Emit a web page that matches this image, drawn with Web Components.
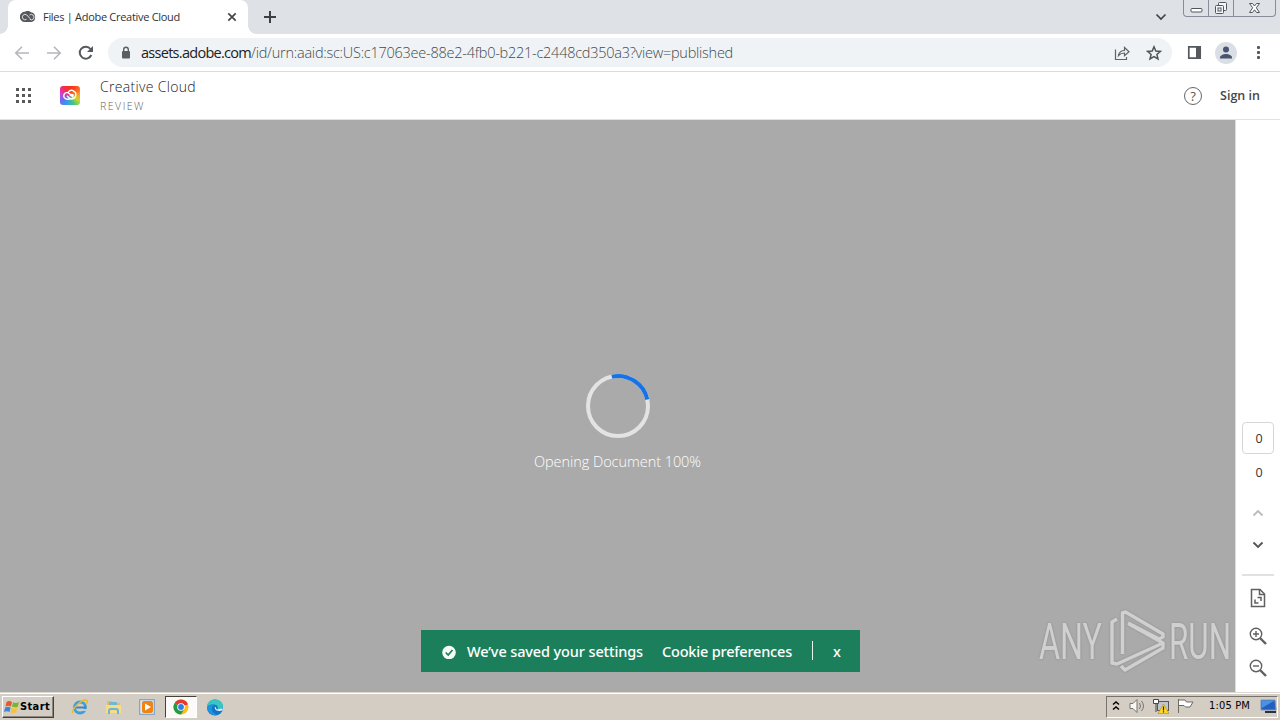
<!DOCTYPE html>
<html lang="en">
<head>
<meta charset="utf-8">
<title>Files | Adobe Creative Cloud</title>
<style>
html,body{margin:0;height:100%;overflow:hidden;font-family:"Open Sans","Noto Sans",sans-serif}
</style>
</head>
<body>
<desktop-screen></desktop-screen>
<script>
function define(name, html, ready) {
  const t = document.createElement('template');
  t.innerHTML = '<style>*{box-sizing:border-box}svg{display:block;flex:none}</style>' + html;
  customElements.define(name, class extends HTMLElement {
    constructor() {
      super();
      this.attachShadow({mode: 'open'}).append(t.content.cloneNode(true));
    }
    connectedCallback() { if (ready) ready(this); }
  });
}

// A single-line label whose tracking adapts to a requested width.
define('fit-label', `<style>
:host{display:block;white-space:pre;flex:none;line-height:20px}
span{display:inline-block}
</style><span><slot></slot></span>`, el => {
  const want = +el.getAttribute('width');
  const s = el.shadowRoot.querySelector('span');
  el.style.width = want + 'px';
  const n = el.textContent.length;
  s.style.letterSpacing = ((want - s.getBoundingClientRect().width) / n) + 'px';
});

define('window-controls', `<style>
:host{display:flex;width:93px;height:17px;border:1px solid #888d99;border-top:0;border-radius:0 0 4px 4px}
div{display:flex;justify-content:center;height:16px;border-right:1px solid #888d99;width:25px}
div:nth-of-type(2){width:25px}div:last-child{border:0;width:41px}
</style>
<div><svg width="13" height="16"><rect x="1" y="8.5" width="11" height="3.5" rx="1" fill="#fff" stroke="#50555f"/></svg></div>
<div><svg width="14" height="16" fill="#f4f5f7" stroke="#50555f"><rect x="4.500" y="2.500" width="8" height="8" rx="1"/><rect x="1.500" y="5.500" width="8" height="8" rx="1"/><rect x="4" y="8" width="3" height="3"/></svg></div>
<div><svg width="13" height="16"><path d="M1.500 3.500h3l2 2.500 2-2.500h3l-3.200 4.300 3.200 4.700h-3l-2-2.700-2 2.700h-3l3.200-4.700z" fill="#fff" stroke="#50555f"/></svg></div>`);

define('tab-strip', `<style>
:host{display:flex;height:34px;background:#dee1e6;padding-left:8px;align-items:flex-start}
.tab{width:240px;height:34px;background:#fff;border-radius:8px 8px 0 0;display:flex;align-items:center;padding-left:12px;position:relative}
.tab:before,.tab:after{content:"";position:absolute;bottom:0;width:8px;height:8px}
.tab:before{left:-8px;background:radial-gradient(circle at 0 0,#dee1e6 7.500px,#fff 8px)}
.tab:after{right:-8px;background:radial-gradient(circle at 100% 0,#dee1e6 7.500px,#fff 8px)}
fit-label{font-size:11px;color:#303236;margin-left:7px}
.x{margin-left:47px}.plus{margin:10px 0 0 15px}.chev{margin:13px 16px 0 auto}
window-controls{margin-right:4px}
</style>
<div class="tab">
<svg width="16" height="12" viewBox="0 0 16 12"><path d="M5 .8a5 5 0 0 0-.2 10.200h6.500A5 5 0 0 0 11 1.200 5 5 0 0 0 5 .8z" fill="#55585c"/><path d="M6.500 8.300A2.700 2.700 0 1 1 6.800 4l3.400 3.700M9.500 4.100a2.700 2.700 0 1 1 .2 4.200" stroke="#e3e3e3" fill="none" stroke-width="1"/></svg>
<fit-label width="137">Files | Adobe Creative Cloud</fit-label>
<svg class="x" width="10" height="10"><path d="M1.300 1.300l7.400 7.400m0-7.400l-7.400 7.400" stroke="#43464a" stroke-width="1.700"/></svg>
</div>
<svg class="plus" width="14" height="14"><path d="M7 1v12M1 7h12" stroke="#3c4043" stroke-width="2"/></svg>
<svg class="chev" width="12" height="8"><path d="M1.500 1.500L6 6l4.500-4.500" fill="none" stroke="#3f444a" stroke-width="1.700"/></svg>
<window-controls></window-controls>`);

define('browser-toolbar', `<style>
:host{display:flex;height:38px;background:#fff;border-bottom:1px solid #dadce0;align-items:center;padding:0 13px 0 14px}
.nav{display:flex;gap:16px}
.url{width:1064px;height:29px;background:#f0f3f5;border-radius:15px;margin-left:14px;display:flex;align-items:center;padding:0 10px 0 12px}
.url fit-label{font-size:14.500px;font-weight:300;color:#44494e}
.url .h{color:#202124;font-weight:400}
.lock{margin-right:9px}.share{margin-left:auto;margin-right:16px}
.panel{margin-left:15px}.av{width:22px;height:22px;border-radius:50%;background:#dadfe6;margin:0 14px 0 13px}
</style>
<div class="nav">
<svg width="16" height="16" fill="none" stroke="#b5b7ba" stroke-width="1.600"><path d="M15 8H2M8 1.800L1.800 8 8 14.200"/></svg>
<svg width="16" height="16" fill="none" stroke="#b5b7ba" stroke-width="1.600"><path d="M1 8h13M8 1.800L14.200 8 8 14.200"/></svg>
<svg width="16" height="16" fill="none" stroke="#55585c" stroke-width="2"><path d="M13.300 10A6 6 0 1 1 12.500 4"/><path d="M15 1v6H9z" fill="#55585c" stroke="none"/></svg>
</div>
<div class="url">
<svg class="lock" width="12" height="14"><rect x="2" y="5" width="8" height="7.500" rx="1" fill="#5a5d61"/><path d="M3.700 6V3.500a2.300 2.300 0 0 1 4.600 0V6" fill="none" stroke="#5a5d61" stroke-width="1.400"/></svg>
<fit-label class="h" width="110">assets.adobe.com</fit-label><fit-label width="482">/id/urn:aaid:sc:US:c17063ee-88e2-4fb0-b221-c2448cd350a3?view=published</fit-label>
<svg class="share" width="16" height="16" fill="none" stroke="#5f6368" stroke-width="1.200"><path d="M1.500 4.500v10h11V12"/><path d="M4.500 10.500c.5-3 2.500-5 6-5V2.500L15 6.700l-4.500 4V8c-2.500 0-4.300.5-6 2.500z"/></svg>
<svg width="16" height="16" fill="none" stroke="#505358" stroke-width="1.500"><path d="M8 1.800l1.800 4.200 4.600.4-3.500 3 1.100 4.500L8 11.500l-4 2.400 1.100-4.500-3.500-3 4.600-.4z"/></svg>
</div>
<svg class="panel" width="15" height="15"><path d="M1.800 1.800h11.400v11.400H1.800z" fill="none" stroke="#55585c" stroke-width="1.700"/><path d="M9 1h5v13H9z" fill="#55585c"/></svg>
<svg class="av" viewBox="0 0 22 22"><circle cx="11" cy="7.500" r="3" fill="#47556f"/><path d="M5 16.500v-1c0-2.300 3.500-3.500 6-3.500s6 1.200 6 3.500v1z" fill="#47556f"/></svg>
<svg width="15" height="16" fill="#55585c"><rect x="6" y="1" width="3" height="3" rx="1"/><rect x="6" y="6" width="3" height="3" rx="1"/><rect x="6" y="11" width="3" height="3" rx="1"/></svg>`);

define('cc-logo', `<style>:host{display:block;width:20px;height:19px;border-radius:3px;background:radial-gradient(circle at 50% 0,#f8301e 0,#f8301e99 25%,transparent 60%),conic-gradient(from 0deg at 50% 50%,#fb421c,#ff9c20 20%,#cbd62d 33%,#43c87b 43%,#3499f2 57%,#7068ee 67%,#d33fdf 79%,#f32578 92%,#fb421c)}</style>
<svg width="20" height="19" fill="none" stroke="#fff" stroke-width="1.400" stroke-linecap="round"><path d="M9 13.200H7a3.300 3.300 0 1 1 2.300-5.700l3.600 3.600M8.200 6.200a4.200 4.200 0 1 1 1.700 6.300L7.400 10.200M10.200 9.200a2 2 0 0 1 3 0"/></svg>`);

define('app-header', `<style>
:host{display:flex;height:48px;background:#fff;border-bottom:1px solid #e1e1e1;align-items:center;padding:0 20px 0 16px}
cc-logo{margin-left:28px}
.names{margin-left:20px;padding-top:2px;display:flex;flex-direction:column}
.a{font-size:14px;font-weight:300;color:#222;line-height:18px;height:19px}
.b{font-size:10.500px;color:#606060;line-height:18px;height:18px;font-weight:300}
.help{margin-left:auto;width:18px;height:18px;border:1.500px solid #666;border-radius:50%;display:flex;justify-content:center;align-items:center;color:#555;font-size:13px}
.s{margin-left:18px;font-size:12.500px;font-weight:600;color:#464646}
</style>
<svg width="16" height="16" fill="#5a5a5a"><path d="M0 0h3v3H0zM6 0h3v3H6zM12 0h3v3h-3zM0 6h3v3H0zM6 6h3v3H6zM12 6h3v3h-3zM0 12h3v3H0zM6 12h3v3H6zM12 12h3v3h-3z"/></svg>
<cc-logo></cc-logo>
<div class="names"><fit-label class="a" width="96">Creative Cloud</fit-label><fit-label class="b" width="45">REVIEW</fit-label></div>
<div class="help">?</div><fit-label class="s" width="40">Sign in</fit-label>`);

define('cookie-bar', `<style>
:host{display:flex;width:439px;height:42px;background:#1b7f5c;align-items:center;padding-left:21px;color:#fff;font-size:14.500px;font-weight:500;font-family:"Noto Sans",sans-serif}
.m{margin-left:11px}.p{margin-left:19px}i{width:1px;height:19px;background:#e9f4f0;margin:0 20px 2px 20px}
</style>
<svg width="14" height="16"><circle cx="7" cy="9.500" r="6.800" fill="#f5faf8"/><path d="M3.700 9.500L6.200 12l4.300-5" fill="none" stroke="#1b7f5c" stroke-width="1.700"/></svg>
<fit-label class="m" width="176">We’ve saved your settings</fit-label><fit-label class="p" width="130">Cookie preferences</fit-label><i></i><fit-label width="9">x</fit-label>`);

define('any-run', `<style>:host{display:block}text{font-family:Roboto,sans-serif;font-size:50px;font-weight:400}</style>
<svg width="200" height="70" fill="#d0d0d0" stroke="none">
<g style="filter:drop-shadow(0 0 1px #8c8c8c)"><text x="3" y="54" textLength="63" lengthAdjust="spacingAndGlyphs">ANY</text><text x="133" y="54" textLength="62" lengthAdjust="spacingAndGlyphs">RUN</text>
<g fill="none" stroke="#d0d0d0" stroke-width="3.500" stroke-linejoin="round"><path d="M81 14l-5 3v41l5 1 46-21-34-19"/><path d="M86.500 49V8l3-1 37.500 22v3l-4 2-31-16M85 61l4 4 38-22v-5"/></g></g></svg>`);

define('review-stage', `<style>
:host{display:grid;width:1235px;height:572px;background:#aaa;grid-template:1fr/1fr;position:relative}
.load{grid-area:1/1;display:flex;flex-direction:column;align-items:center;padding-top:253px}
.load fit-label{margin-top:13px;font-size:14.500px;font-weight:350;color:#fff}
cookie-bar{grid-area:1/1;align-self:end;margin:0 0 20px 421px}
any-run{position:absolute;right:-1px;bottom:17px}
</style>
<div class="load"><svg width="66" height="66" fill="none" stroke-width="4"><circle cx="33" cy="33" r="30" stroke="#e3e3e3"/><path d="M26.800 3.650A30 30 0 0 1 62.300 26.500" stroke="#1473e6"/></svg><fit-label width="167">Opening Document 100%</fit-label></div>
<cookie-bar></cookie-bar><any-run></any-run>`);

define('page-rail', `<style>
:host{display:flex;flex-direction:column;width:45px;height:572px;background:#fff;align-items:center;border-left:1px solid #ddd}
.n{width:32px;height:32px;border:1px solid #d6d6d6;border-radius:4px;display:flex;align-items:center;justify-content:center;margin-top:302px;font-size:12.500px;color:#333;padding-left:2px}
.t{border:0;margin-top:1px;height:34px}
.u{margin-top:20px}.d{margin-top:24px}hr{width:32px;border:0;height:2px;background:#e1e1e1;margin:25px 0 12px}
.z{margin-top:19px}.y{margin-top:14px}
</style>
<div class="n">0</div><div class="n t">0</div>
<svg class="u" width="12" height="8"><path d="M1.500 6.500L6 2l4.500 4.500" fill="none" stroke="#bbb" stroke-width="1.800"/></svg>
<svg class="d" width="12" height="8"><path d="M1.500 1.500L6 6l4.500-4.500" fill="none" stroke="#555" stroke-width="1.900"/></svg>
<hr>
<svg width="16" height="20" fill="none" stroke="#606060" stroke-width="1.500"><path d="M1.500 1.500h8.500L14.500 6v12.500h-13z"/><path d="M9.500 2v4.500h5M7.500 9.500H11V13M8.500 15H5v-3.500"/></svg>
<svg class="z" width="18" height="18" fill="none" stroke="#606060" stroke-width="1.400"><circle cx="7" cy="7" r="5.700"/><path d="M4 7h6M7 4v6"/><path d="M11 11l6 6" stroke-width="2.400"/></svg>
<svg class="y" width="18" height="18" fill="none" stroke="#606060" stroke-width="1.400"><circle cx="7" cy="7" r="5.700"/><path d="M4 7h6"/><path d="M11 11l6 6" stroke-width="2.400"/></svg>`);

define('system-tray', `<style>
:host{display:flex;width:172px;height:22px;border:1px solid;border-color:#77736c #fff #fff #77736c;align-items:center;padding:0 0 2px 5px}
fit-label{font:11px/20px "DejaVu Sans Condensed","DejaVu Sans",sans-serif;font-stretch:condensed;color:#000;margin:0 10px 0 15px}
.v{margin-left:9px}.n{margin-left:8px}.f{margin-left:8px}
</style>
<svg width="8" height="12" fill="none" stroke="#000" stroke-width="1.500"><path d="M1 4.500L4 2l3 2.500M1 9.500L4 7l3 2.500"/></svg>
<svg class="v" width="16" height="16"><path d="M1 5.500h3l4-4v13l-4-4H1z" fill="#f8f8f6" stroke="#77746e"/><path d="M10.500 5q2 3 0 6M12.500 3q4 5 0 10" fill="none" stroke="#77746e"/></svg>
<svg class="n" width="16" height="16"><rect x="4.500" y="3.500" width="11" height="9" fill="#bec7d0" stroke="#55565a"/><path d="M.5 1.500h5v4h-5zM3 5v9" fill="#fff" stroke="#44464a"/><path d="M10.500 6L16 15.500H5z" fill="#ffd82a" stroke="#b58b00" stroke-width=".6"/><path d="M10.500 8.500v4M10.500 13.200v1.300" stroke="#222" stroke-width="1.200"/></svg>
<svg class="f" width="17" height="16"><path d="M1.500 1v14M2 2h6l1.500 2H16l-3 5H8.500L7 7.500H2" fill="#fff" stroke="#6d6a64"/></svg>
<fit-label width="41">1:05 PM</fit-label>
<svg width="17" height="16"><path d="M1 2h14l1 10H1z" fill="#235fc1" stroke="#7395be"/><path d="M1.500 2.500h13L2 10z" fill="#4d91e2"/><path d="M5 14h11" stroke="#263442" stroke-width="2"/></svg>`);

define('task-bar', `<style>
:host{display:flex;height:28px;background:#d4cdc4;border-top:1px solid #ddd9d2;box-shadow:inset 0 1px #fff;align-items:center;padding:1px 2px 0 2px}
.start{display:flex;align-items:center;width:52px;height:22px;border:1px solid;border-color:#fff #45423d #45423d #fff;box-shadow:inset -1px -1px #8b867e;padding-left:1px}
.start fit-label{font:bold 11px/20px "DejaVu Sans Condensed","DejaVu Sans",sans-serif;color:#000}
.apps{display:flex;align-items:center;margin-left:18px}
.on{width:32px;height:22px;background:#fbfaf8;border:1px solid;border-color:#45423d #fff #fff #45423d;display:flex;align-items:center;justify-content:center}
.g{margin-left:17px}.w{margin:0 10px 0 17px}.e{margin-left:9px}
system-tray{margin-left:auto}
</style>
<div class="start"><svg width="16" height="16"><path d="M2.500 3Q5 1 8 3L7 7.500Q4 6 1.500 7.500z" fill="#e45a28"/><path d="M9 3.300q2.700 1.500 6-.3l-1.200 4.700Q11 9 8 7.600z" fill="#75b72f"/><path d="M1.200 8.500q2.500-1.500 5.400 0L5.500 13Q3 11.500 0 13z" fill="#3c86d9"/><path d="M7.700 8.700q2.500 1.500 5.700 0l-1.200 4.600q-2.700 1.500-5.600 0z" fill="#f5c431"/></svg><fit-label width="30">Start</fit-label></div>
<div class="apps">
<svg width="16" height="16" fill="none"><circle cx="8" cy="8.500" r="5.500" stroke="#3aa0df" stroke-width="2.800"/><path d="M9 11h6" stroke="#d4cdc4" stroke-width="1.800"/><path d="M4 8.500h10" stroke="#3287cf" stroke-width="2"/><path d="M1 14C-1 10 11-1 15 1.500c1 .7 0 2.500-1 3.500" stroke="#ecb92f" stroke-width="1.500"/></svg>
<svg class="g" width="17" height="16"><path d="M2 2h5l1 2h7v10H2z" fill="#e9bd51"/><path d="M4 3h8v4H4z" fill="#70b7d5"/><path d="M1 6h15v8H1z" fill="#f6dd83"/><path d="M4 15v-3q0-2 2-2h5q2 0 2 2v3" fill="none" stroke="#68b4df" stroke-width="2"/></svg>
<svg class="w" width="16" height="16"><rect x=".7" y=".7" width="14.600" height="14.600" fill="#d9e9f6" stroke="#6b9dcc"/><rect x="3" y="2" width="11" height="12" rx="2" fill="#f18316"/><path d="M6 4.500l6 3.500-6 3.500z" fill="#fff"/></svg>
<div class="on"><svg width="16" height="16"><circle cx="8" cy="8" r="7.500" fill="#fbc116"/><path d="M8 8L1.500 4.250A7.500 7.500 0 0 1 14.500 4.250z" fill="#e33b2e"/><path d="M8 8L1.500 4.250A7.500 7.500 0 0 0 8 15.500l3.300-5.600z" fill="#25994b"/><path d="M8 4h6.400v2H8z" fill="#e33b2e"/><circle cx="8" cy="8" r="3.800" fill="#fff"/><circle cx="8" cy="8" r="2.900" fill="#347de9"/></svg></div>
<svg class="e" width="18" height="17"><circle cx="9" cy="8.500" r="8" fill="#1573c5"/><path d="M1 8C1 3 5 .5 9 .5c5 0 8 3.500 8 6.500 0 3-3 4-6 3.500 2-2 0-5-3-5S2 6 1 8z" fill="#39c5c3"/><path d="M8 6c-4 3-2 8 3 10-5 1-9-2-10-7 1-3 4-4 7-3z" fill="#1b93df"/><path d="M9 7.500c-1 3 2 5.500 7 4l1-2-6 1c-1-.5-.7-1.500-2-3z" fill="#edf8f9"/></svg>
</div>
<system-tray></system-tray>`);

define('desktop-screen', `<style>
:host{display:flex;flex-direction:column;width:1280px;height:720px;background:#fff}
.body{display:flex;height:572px}
</style><tab-strip></tab-strip><browser-toolbar></browser-toolbar><app-header></app-header>
<div class="body"><review-stage></review-stage><page-rail></page-rail></div><task-bar></task-bar>`);
</script>
</body>
</html>
